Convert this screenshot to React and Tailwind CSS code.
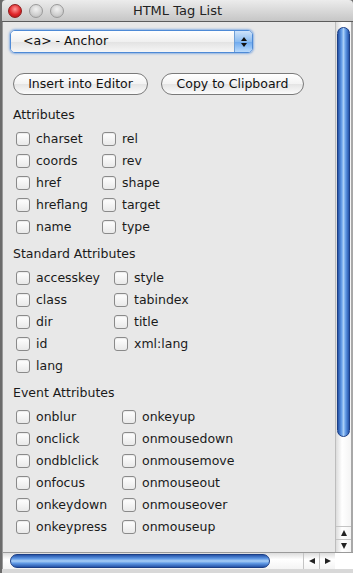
import React from "react";

const font = { fontFamily: '"Lucida Grande", "DejaVu Sans", sans-serif' };

const Check = ({ label }) => (
  <label className="flex items-center h-[22px] whitespace-nowrap">
    <span className="w-[14px] h-[14px] rounded-[3px] border border-[#8a8a8a] bg-[linear-gradient(#ffffff,#e9e9e9)] shadow-[inset_0_1px_1px_rgba(0,0,0,0.08)] shrink-0" />
    <span className="ml-[6px] text-[12.5px] text-[#1a1a1a]">{label}</span>
  </label>
);

const Section = ({ title, cols, colX, first }) => (
  <div className={first ? "mt-[11px]" : "mt-[7px]"}>
    <div className="text-[12.5px] text-[#1a1a1a] h-[18px] leading-[18px] pl-[10px]">{title}</div>
    <div className="flex mt-[4px] pl-[13px]">
      {cols.map((col, i) => (
        <div key={i} className={i === 0 ? colX : ""}>
          {col.map((l) => (
            <Check key={l} label={l} />
          ))}
        </div>
      ))}
    </div>
  </div>
);

const Light = ({ red }) => (
  <span
    className={
      "w-[14px] h-[14px] rounded-full border " +
      (red
        ? "border-[#8e1b1b] bg-[radial-gradient(circle_at_50%_35%,#ff9a9a,#e0262a_55%,#a30f12)]"
        : "border-[#9a9a9a] bg-[radial-gradient(circle_at_50%_35%,#f2f2f2,#cfcfcf_60%,#b5b5b5)]")
    }
  />
);

export default function App() {
  return (
    <div className="w-[353px] h-[573px] flex flex-col bg-[#6b6b6b] overflow-hidden" style={font}>
      <div className="h-[22px] shrink-0 flex items-center relative bg-[linear-gradient(#ececec,#c6c6c6)] border-b border-[#5c5c5c] ml-[2px] rounded-t-[4px]">
        <div className="flex gap-[7px] pl-[6px]">
          <Light red />
          <Light />
          <Light />
        </div>
        <div className="absolute inset-0 flex items-center justify-center text-[13px] text-[#222]">HTML Tag List</div>
      </div>

      <div className="flex flex-1 min-h-0 ml-[2px]">
        <div className="flex-1 bg-[#e8e8e8] pt-[8px] border-l border-[#9a9a9a]">
          <div className="ml-[7px] w-[243px] h-[23px] rounded-[5px] border border-[#4e8ad6] shadow-[0_0_2px_1px_rgba(80,140,220,0.6)] flex overflow-hidden">
            <div className="flex-1 bg-[linear-gradient(#ffffff,#f0f0f0_50%,#e2e2e2_51%,#f6f6f6)] flex items-center pl-[12px] text-[12.5px] text-[#111]">
              &lt;a&gt; - Anchor
            </div>
            <div className="w-[18px] border-l border-[#6f9fd6] bg-[linear-gradient(#cfe3fa,#8cbcf0_50%,#6aa7ee_51%,#b9dafc)] flex flex-col items-center justify-center gap-[2px]">
              <span className="w-0 h-0 border-l-[3px] border-r-[3px] border-b-[4px] border-l-transparent border-r-transparent border-b-[#111]" />
              <span className="w-0 h-0 border-l-[3px] border-r-[3px] border-t-[4px] border-l-transparent border-r-transparent border-t-[#111]" />
            </div>
          </div>

          <div className="flex gap-[13px] ml-[10px] mt-[20px]">
            <div className="w-[135px] h-[22px] rounded-full border border-[#7a7a7a] bg-[linear-gradient(#ffffff,#f3f3f3_50%,#e4e4e4_51%,#fbfbfb)] flex items-center justify-center text-[12.5px] text-[#111]">
              Insert into Editor
            </div>
            <div className="w-[143px] h-[22px] rounded-full border border-[#7a7a7a] bg-[linear-gradient(#ffffff,#f3f3f3_50%,#e4e4e4_51%,#fbfbfb)] flex items-center justify-center text-[12.5px] text-[#111]">
              Copy to Clipboard
            </div>
          </div>

          <Section
            first
            title="Attributes"
            colX="w-[86px]"
            cols={[
              ["charset", "coords", "href", "hreflang", "name"],
              ["rel", "rev", "shape", "target", "type"],
            ]}
          />
          <Section
            title="Standard Attributes"
            colX="w-[98px]"
            cols={[
              ["accesskey", "class", "dir", "id", "lang"],
              ["style", "tabindex", "title", "xml:lang"],
            ]}
          />
          <Section
            title="Event Attributes"
            colX="w-[106px]"
            cols={[
              ["onblur", "onclick", "ondblclick", "onfocus", "onkeydown", "onkeypress"],
              ["onkeyup", "onmousedown", "onmousemove", "onmouseout", "onmouseover", "onmouseup"],
            ]}
          />
        </div>

        <div className="w-[16px] flex flex-col bg-[linear-gradient(to_right,#dcdcdc,#ffffff_40%,#f4f4f4)] border-l border-[#bdbdbd]">
          <div className="flex-1 px-[1px] pt-[5px] pb-[4px] flex flex-col">
            <div className="h-[410px] rounded-full border border-[#1c3f86] bg-[linear-gradient(to_right,#2553a8,#5f98e4_30%,#a9cff7_50%,#5f98e4_70%,#2553a8)]" />
          </div>
          <div className="h-[13px] border-t border-[#c4c4c4] flex items-center justify-center">
            <span className="w-0 h-0 border-l-[3.5px] border-r-[3.5px] border-b-[6px] border-l-transparent border-r-transparent border-b-[#222]" />
          </div>
          <div className="h-[13px] border-t border-[#c4c4c4] flex items-center justify-center">
            <span className="w-0 h-0 border-l-[3.5px] border-r-[3.5px] border-t-[6px] border-l-transparent border-r-transparent border-t-[#222]" />
          </div>
        </div>
        <div className="w-[2px] bg-[#a8a8a8]" />
      </div>

      <div className="h-[17px] shrink-0 flex ml-[2px] border-t border-[#9a9a9a]">
        <div className="flex-1 flex bg-[linear-gradient(#dcdcdc,#ffffff_40%,#f4f4f4)] border-l border-[#9a9a9a]">
          <div className="flex-1 py-[1px] pl-[7px] pr-[28px]">
            <div className="w-[260px] h-full rounded-full border border-[#1c3f86] bg-[linear-gradient(#2553a8,#5f98e4_30%,#a9cff7_50%,#5f98e4_70%,#2553a8)]" />
          </div>
          <div className="w-[16px] border-l border-[#c4c4c4] flex items-center justify-center">
            <span className="w-0 h-0 border-t-[3.5px] border-b-[3.5px] border-r-[6px] border-t-transparent border-b-transparent border-r-[#222]" />
          </div>
          <div className="w-[16px] border-l border-[#c4c4c4] flex items-center justify-center">
            <span className="w-0 h-0 border-t-[3.5px] border-b-[3.5px] border-l-[6px] border-t-transparent border-b-transparent border-l-[#222]" />
          </div>
        </div>
        <div className="w-[18px] bg-white" />
      </div>
      <div className="h-[4px] shrink-0 bg-[#d8d8d8] ml-[2px]" />
    </div>
  );
}
